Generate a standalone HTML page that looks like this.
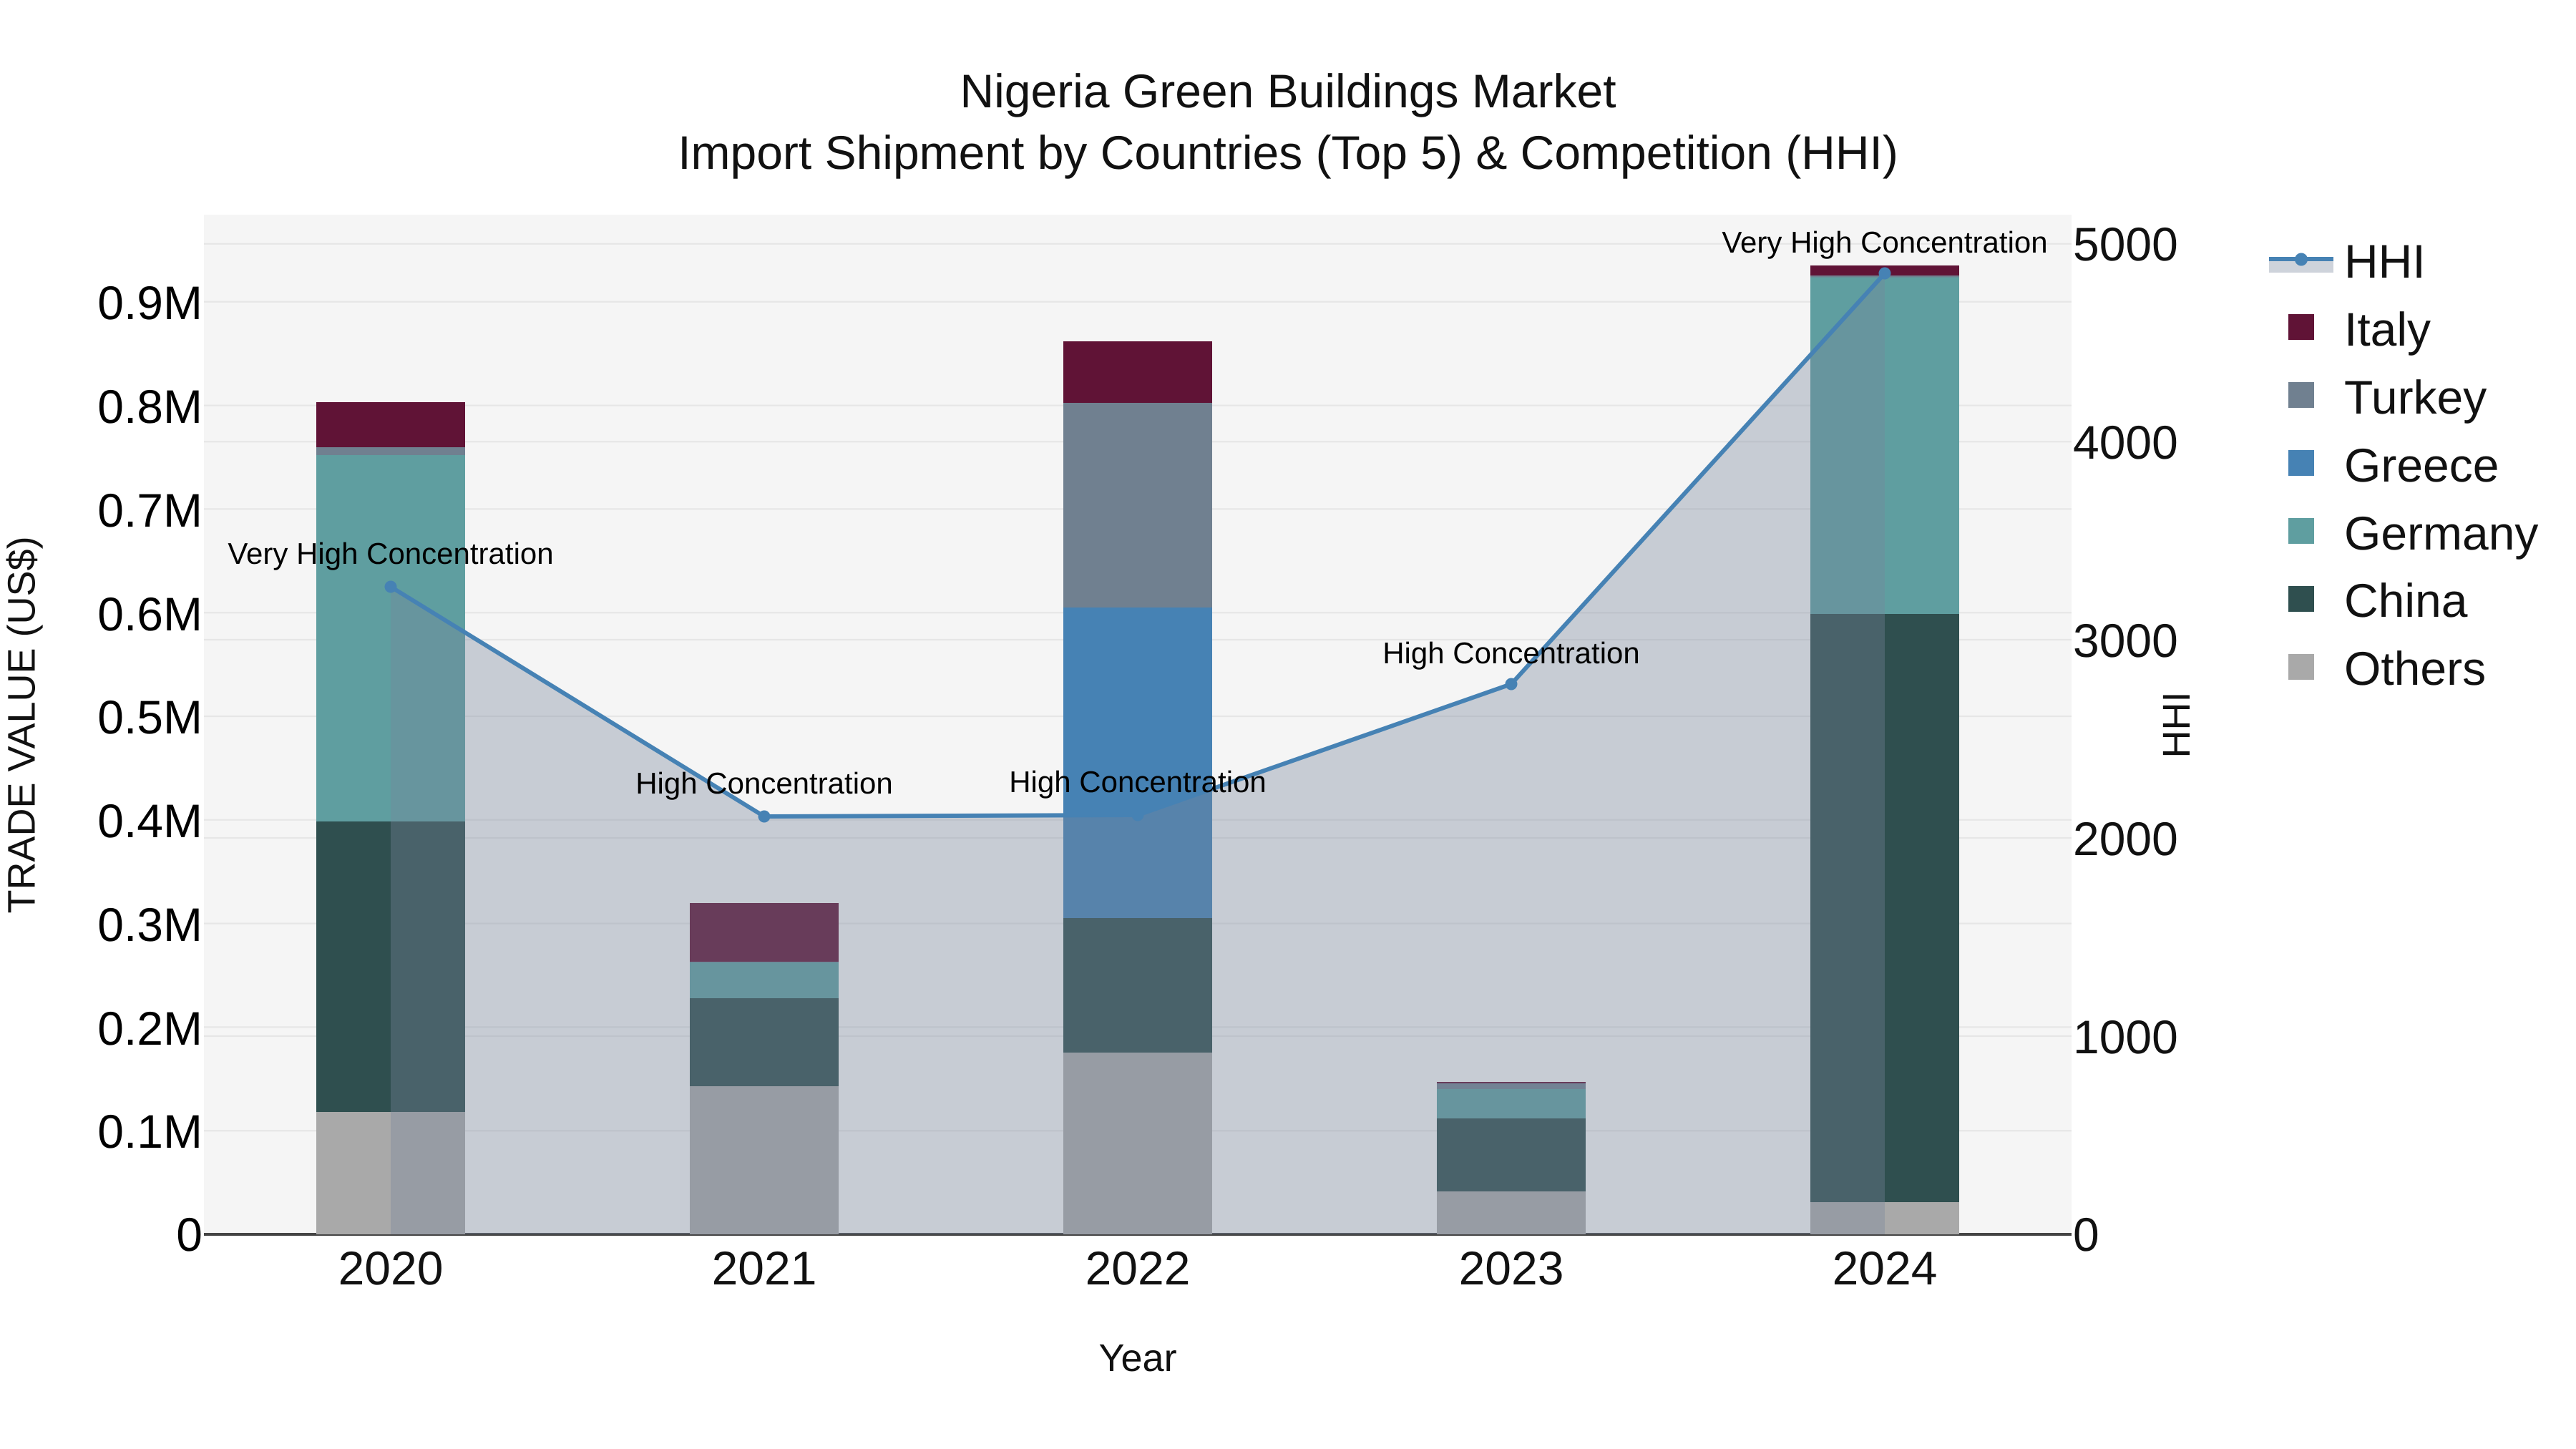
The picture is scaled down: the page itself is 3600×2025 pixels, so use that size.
<!DOCTYPE html>
<html>
<head>
<meta charset="utf-8">
<title>Nigeria Green Buildings Market</title>
<style>
html,body{margin:0;padding:0;background:#fff;width:3600px;height:2025px;overflow:hidden}
svg{display:block}
text{font-family:"Liberation Sans",Arial,sans-serif;text-rendering:geometricPrecision}
.t{font-size:66px;fill:#111;text-anchor:middle}
.yl{font-size:66px;fill:#000;text-anchor:end}
.yr{font-size:66px;fill:#111;text-anchor:start}
.x{font-size:66px;fill:#111;text-anchor:middle}
.a{font-size:42px;fill:#000;text-anchor:middle}
.l{font-size:66px;fill:#111;text-anchor:start}
.g{stroke:#e6e6e6;stroke-width:2.25}
</style>
</head>
<body>
<svg width="3600" height="2025" viewBox="0 0 3600 2025" xmlns="http://www.w3.org/2000/svg">
<rect width="3600" height="2025" fill="#fff"/>
<rect x="285" y="300" width="2610" height="1425" fill="#f5f5f5"/>

<!-- grid -->
<g class="g">
<line x1="285" x2="2895" y1="1580.2" y2="1580.2"/>
<line x1="285" x2="2895" y1="1435.4" y2="1435.4"/>
<line x1="285" x2="2895" y1="1290.6" y2="1290.6"/>
<line x1="285" x2="2895" y1="1145.8" y2="1145.8"/>
<line x1="285" x2="2895" y1="1001" y2="1001"/>
<line x1="285" x2="2895" y1="856.2" y2="856.2"/>
<line x1="285" x2="2895" y1="711.4" y2="711.4"/>
<line x1="285" x2="2895" y1="566.6" y2="566.6"/>
<line x1="285" x2="2895" y1="421.8" y2="421.8"/>
<line x1="285" x2="2895" y1="1448" y2="1448"/>
<line x1="285" x2="2895" y1="1171" y2="1171"/>
<line x1="285" x2="2895" y1="894" y2="894"/>
<line x1="285" x2="2895" y1="617.3" y2="617.3"/>
<line x1="285" x2="2895" y1="340.7" y2="340.7"/>
</g>
<rect x="285" y="1723" width="2610" height="4" fill="#444"/>

<!-- bars -->
<g>
<rect x="442" y="562" width="208" height="63" fill="#601336"/>
<rect x="442" y="625" width="208" height="11" fill="#708090"/>
<rect x="442" y="636" width="208" height="512" fill="#5f9ea0"/>
<rect x="442" y="1148" width="208" height="406" fill="#2f4f4f"/>
<rect x="442" y="1554" width="208" height="171" fill="#a9a9a9"/>

<rect x="964" y="1262" width="208" height="82" fill="#601336"/>
<rect x="964" y="1344" width="208" height="1" fill="#708090"/>
<rect x="964" y="1345" width="208" height="50" fill="#5f9ea0"/>
<rect x="964" y="1395" width="208" height="123" fill="#2f4f4f"/>
<rect x="964" y="1518" width="208" height="207" fill="#a9a9a9"/>

<rect x="1486" y="477" width="208" height="86" fill="#601336"/>
<rect x="1486" y="563" width="208" height="286" fill="#708090"/>
<rect x="1486" y="849" width="208" height="434" fill="#4682b4"/>
<rect x="1486" y="1283" width="208" height="188" fill="#2f4f4f"/>
<rect x="1486" y="1471" width="208" height="254" fill="#a9a9a9"/>

<rect x="2008" y="1512" width="208" height="2" fill="#601336"/>
<rect x="2008" y="1514" width="208" height="8" fill="#708090"/>
<rect x="2008" y="1522" width="208" height="41" fill="#5f9ea0"/>
<rect x="2008" y="1563" width="208" height="102" fill="#2f4f4f"/>
<rect x="2008" y="1665" width="208" height="60" fill="#a9a9a9"/>

<rect x="2530" y="371" width="208" height="14" fill="#601336"/>
<rect x="2530" y="385" width="208" height="2.5" fill="#708090"/>
<rect x="2530" y="387.5" width="208" height="470.5" fill="#5f9ea0"/>
<rect x="2530" y="858" width="208" height="822" fill="#2f4f4f"/>
<rect x="2530" y="1680" width="208" height="45" fill="#a9a9a9"/>
</g>

<!-- HHI area and line -->
<polygon points="546,820 1068,1141 1590,1139 2112,956 2634,382 2634,1725 546,1725" fill="rgb(118,132,155)" fill-opacity="0.36"/>
<polyline points="546,820 1068,1141 1590,1139 2112,956 2634,382" fill="none" stroke="#4682b4" stroke-width="6" stroke-linejoin="round"/>
<g fill="#4682b4">
<circle cx="546" cy="820" r="8.5"/>
<circle cx="1068" cy="1141" r="8.5"/>
<circle cx="1590" cy="1139" r="8.5"/>
<circle cx="2112" cy="956" r="8.5"/>
<circle cx="2634" cy="382" r="8.5"/>
</g>

<!-- annotations -->
<text class="a" x="546" y="788">Very High Concentration</text>
<text class="a" x="1068" y="1109">High Concentration</text>
<text class="a" x="1590" y="1107">High Concentration</text>
<text class="a" x="2112" y="927">High Concentration</text>
<text class="a" x="2634" y="353">Very High Concentration</text>

<!-- title -->
<text class="t" x="1800" y="150">Nigeria Green Buildings Market</text>
<text class="t" x="1800" y="236">Import Shipment by Countries (Top 5) &amp; Competition (HHI)</text>

<!-- left axis ticks -->
<text class="yl" x="283" y="1748">0</text>
<text class="yl" x="283" y="1604">0.1M</text>
<text class="yl" x="283" y="1460">0.2M</text>
<text class="yl" x="283" y="1315">0.3M</text>
<text class="yl" x="283" y="1170">0.4M</text>
<text class="yl" x="283" y="1025">0.5M</text>
<text class="yl" x="283" y="881">0.6M</text>
<text class="yl" x="283" y="736">0.7M</text>
<text class="yl" x="283" y="591">0.8M</text>
<text class="yl" x="283" y="446">0.9M</text>

<!-- right axis ticks -->
<text class="yr" x="2897" y="1748">0</text>
<text class="yr" x="2897" y="1472">1000</text>
<text class="yr" x="2897" y="1195">2000</text>
<text class="yr" x="2897" y="918">3000</text>
<text class="yr" x="2897" y="641">4000</text>
<text class="yr" x="2897" y="364">5000</text>

<!-- x axis ticks -->
<text class="x" x="546" y="1795">2020</text>
<text class="x" x="1068" y="1795">2021</text>
<text class="x" x="1590" y="1795">2022</text>
<text class="x" x="2112" y="1795">2023</text>
<text class="x" x="2634" y="1795">2024</text>

<!-- axis titles -->
<text x="1590" y="1916" font-size="54" fill="#111" text-anchor="middle">Year</text>
<text transform="translate(48.5 1013) rotate(-90)" font-size="54" fill="#111" text-anchor="middle">TRADE VALUE (US$)</text>
<text transform="translate(3060 1013) rotate(-90)" font-size="54" fill="#111" text-anchor="middle">HHI</text>

<!-- legend -->
<rect x="3171" y="362" width="90" height="19" fill="rgb(118,132,155)" fill-opacity="0.36"/>
<rect x="3171" y="359" width="90" height="6" fill="#4682b4"/>
<circle cx="3216" cy="362.5" r="9" fill="#4682b4"/>
<text class="l" x="3276" y="388">HHI</text>
<rect x="3198" y="439" width="36" height="36" fill="#601336"/>
<text class="l" x="3276" y="483">Italy</text>
<rect x="3198" y="534" width="36" height="36" fill="#708090"/>
<text class="l" x="3276" y="578">Turkey</text>
<rect x="3198" y="629" width="36" height="36" fill="#4682b4"/>
<text class="l" x="3276" y="673">Greece</text>
<rect x="3198" y="724" width="36" height="36" fill="#5f9ea0"/>
<text class="l" x="3276" y="768">Germany</text>
<rect x="3198" y="819" width="36" height="36" fill="#2f4f4f"/>
<text class="l" x="3276" y="862">China</text>
<rect x="3198" y="914" width="36" height="36" fill="#a9a9a9"/>
<text class="l" x="3276" y="957">Others</text>
</svg>
</body>
</html>
